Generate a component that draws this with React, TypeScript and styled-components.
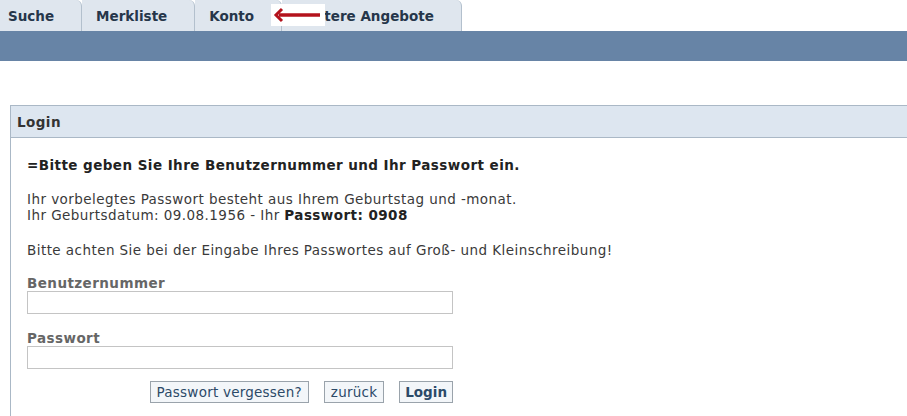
import React from "react";
import styled, { createGlobalStyle } from "styled-components";

const Global = createGlobalStyle`
  html, body { margin: 0; padding: 0; background: #ffffff; }
  body { font-family: "DejaVu Sans", Verdana, sans-serif; font-size: 13.5px; letter-spacing: 0.44px; color: #333333; }
`;

const Page = styled.div`
  width: 907px;
  height: 416px;
  overflow: hidden;
  display: flex;
  flex-direction: column;
`;

const TabRow = styled.nav`
  position: relative;
  display: flex;
  height: 31px;
  margin-left: -6px;
`;

const Tab = styled.div`
  display: flex;
  align-items: center;
  height: 31px;
  box-sizing: border-box;
  padding: 0 27px 0 14px;
  background: #dfe6ee;
  border-right: 1px solid #b3c0cd;
  border-top-right-radius: 6px;
  font-weight: bold;
  font-size: 13.5px;
  letter-spacing: 0;
  color: #26364a;
  white-space: nowrap;
`;

const ArrowMark = styled.span`
  position: absolute;
  left: 277px;
  top: 4px;
  width: 54px;
  height: 22px;
  background: #ffffff;
  display: flex;
  align-items: center;
  justify-content: center;
`;

const Bar = styled.div`
  height: 30px;
  background: #6784a6;
`;

const Panel = styled.section`
  margin: 44px 0 0 10px;
  border-left: 1px solid #aab8c6;
  flex: 1;
  display: flex;
  flex-direction: column;
`;

const PanelHead = styled.h2`
  margin: 0;
  height: 31px;
  display: flex;
  align-items: center;
  padding-left: 6px;
  background: #dde6f0;
  border-top: 1px solid #aab8c6;
  border-bottom: 1px solid #aab8c6;
  font-size: 13.5px;
  font-weight: bold;
  color: #333333;
`;

const PanelBody = styled.div`
  padding: 19px 16px 0 16px;
  line-height: 16px;
`;

const Para = styled.p<{ $gap?: number; $bold?: boolean }>`
  margin: 0 0 ${(p) => p.$gap ?? 18}px 0;
  font-weight: ${(p) => (p.$bold ? "bold" : "normal")};
  color: ${(p) => (p.$bold ? "#222222" : "#3a3a3a")};
`;

const Strong = styled.b`
  color: #222222;
`;

const Form = styled.form`
  width: 426px;
  display: flex;
  flex-direction: column;
`;

const Label = styled.label<{ $top: number }>`
  display: block;
  margin-top: ${(p) => p.$top}px;
  height: 16px;
  line-height: 16px;
  font-weight: bold;
  color: #666666;
`;

const Input = styled.input`
  display: block;
  width: 100%;
  height: 23px;
  box-sizing: border-box;
  border: 1px solid #c4c4c4;
  background: #ffffff;
  padding: 0 3px;
  font-family: inherit;
  font-size: 13px;
`;

const Buttons = styled.div`
  display: flex;
  justify-content: flex-end;
  gap: 15px;
  margin-top: 12px;
`;

const Btn = styled.button<{ $bold?: boolean }>`
  height: 22px;
  box-sizing: border-box;
  padding: 0 ${(p) => (p.$bold ? 5 : 6)}px;
  border: 1px solid #9aa3ab;
  background: #f3f6f9;
  font-family: inherit;
  font-size: 13.5px;
  letter-spacing: ${(p) => (p.$bold ? 0 : 0.23)}px;
  font-weight: ${(p) => (p.$bold ? "bold" : "normal")};
  color: #2c4a68;
  line-height: 20px;
`;

export default function App() {
  return (
    <Page>
      <Global />
      <TabRow>
        <Tab>Suche</Tab>
        <Tab>Merkliste</Tab>
        <Tab>Konto</Tab>
        <Tab>Weitere Angebote</Tab>
        <ArrowMark>
          <svg width="50" height="16" viewBox="0 0 50 16">
            <path d="M6 8 H47" stroke="#b3121c" strokeWidth="3.5" fill="none" />
            <path d="M9 2 L3 8 L9 14" stroke="#b3121c" strokeWidth="3" fill="none" />
          </svg>
        </ArrowMark>
      </TabRow>
      <Bar />
      <Panel>
        <PanelHead>Login</PanelHead>
        <PanelBody>
          <Para $bold $gap={18}>=Bitte geben Sie Ihre Benutzernummer und Ihr Passwort ein.</Para>
          <Para $gap={19}>
            Ihr vorbelegtes Passwort besteht aus Ihrem Geburtstag und -monat.
            <br />
            Ihr Geburtsdatum: 09.08.1956 - Ihr <Strong>Passwort: 0908</Strong>
          </Para>
          <Para $gap={0}>Bitte achten Sie bei der Eingabe Ihres Passwortes auf Groß- und Kleinschreibung!</Para>
          <Form>
            <Label $top={17}>Benutzernummer</Label>
            <Input type="text" />
            <Label $top={16}>Passwort</Label>
            <Input type="password" />
            <Buttons>
              <Btn type="button">Passwort vergessen?</Btn>
              <Btn type="button">zurück</Btn>
              <Btn type="button" $bold>Login</Btn>
            </Buttons>
          </Form>
        </PanelBody>
      </Panel>
    </Page>
  );
}
